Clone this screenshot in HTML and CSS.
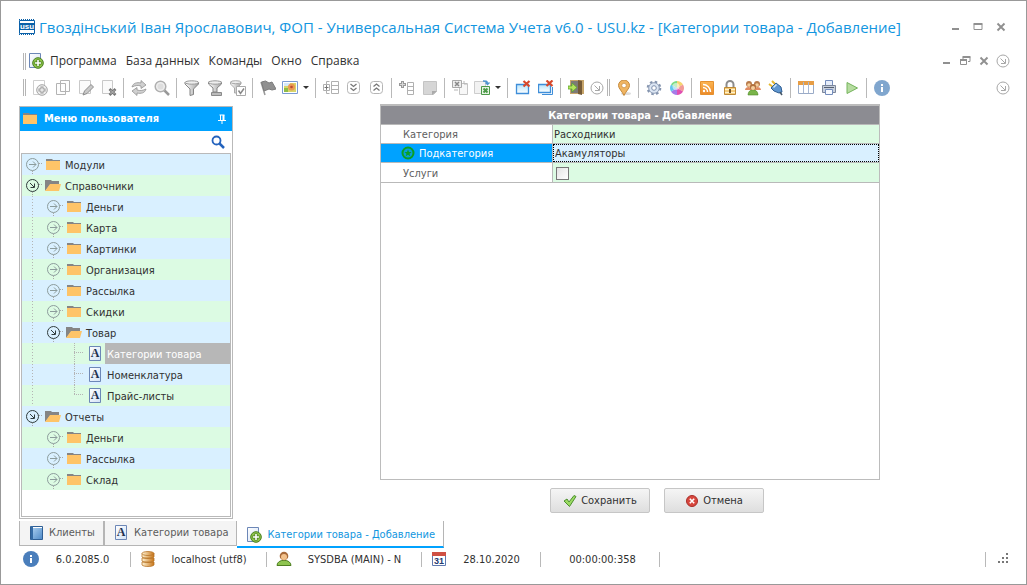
FILE: index.html
```html
<!DOCTYPE html>
<html lang="ru">
<head>
<meta charset="utf-8">
<title>Универсальная Система Учета</title>
<link rel="stylesheet" href="styles.css">
</head>
<body>
<svg class="sprite" aria-hidden="true">
  <defs>
    <linearGradient id="gPaper" x1="0" y1="0" x2="1" y2="1"><stop offset="0" stop-color="#fff"/><stop offset="1" stop-color="#d3e2f6"/></linearGradient>
    <linearGradient id="gFunnel" x1="0" y1="0" x2="1" y2="0"><stop offset="0" stop-color="#fff"/><stop offset="1" stop-color="#a2a2a2"/></linearGradient>
    <linearGradient id="gSky" x1="0" y1="0" x2="0" y2="1"><stop offset="0" stop-color="#b8e4fb"/><stop offset="1" stop-color="#fff"/></linearGradient>
    <linearGradient id="gBook" x1="0" y1="0" x2="1" y2="1"><stop offset="0" stop-color="#b4d6f4"/><stop offset="1" stop-color="#4d88c6"/></linearGradient>
    <linearGradient id="gGold" x1="0" y1="0" x2="1" y2="0"><stop offset="0" stop-color="#fff4d5"/><stop offset="1" stop-color="#c87416"/></linearGradient>
    <linearGradient id="gRss" x1="0" y1="0" x2="0" y2="1"><stop offset="0" stop-color="#fbb552"/><stop offset="1" stop-color="#ec8a28"/></linearGradient>
  </defs>
  <symbol id="folder" viewBox="0 0 16 16"><path d="M1 2h6l1 1h7v3H1z" fill="#858585"/><path d="M1 4h14v9H1z" fill="#fec468"/></symbol>
  <symbol id="folderOpen" viewBox="0 0 16 16"><path d="M0 2h6l1 1h7v4H5L0 13z" fill="#858585"/><path d="M5 6h11l-2 7H0z" fill="#fec468"/></symbol>
  <symbol id="v" viewBox="0 0 21 21"><path d="M10.500 0v21" stroke="#b4b4b4" stroke-dasharray="1 2"/></symbol>
  <symbol id="tee" viewBox="0 0 21 21"><path d="M10.500 0v21M10 9.500h10" stroke="#b4b4b4" stroke-dasharray="1 1"/></symbol>
  <symbol id="corner" viewBox="0 0 21 21"><path d="M10.500 0v10M10 9.500h10" stroke="#b4b4b4" stroke-dasharray="1 1"/></symbol>
  <symbol id="closed" viewBox="0 0 21 21"><path d="M10.500 17v4M17 9.500h4" stroke="#a9a9a9" stroke-dasharray="1 1"/><g fill="none" stroke="#8c9c9c"><circle cx="10.500" cy="10.500" r="6"/><path d="M7 10.500h7M11 7.500l3 3-3 3"/></g></symbol>
  <symbol id="opened" viewBox="0 0 21 21"><path d="M10.500 17v4M17 9.500h4" stroke="#a9a9a9" stroke-dasharray="1 1"/><g fill="none" stroke="#303c3c"><circle cx="10.500" cy="10.500" r="6"/><path d="M8 8l4 4M12.500 8.500v4h-4"/></g></symbol>
  <symbol id="doc" viewBox="0 0 16 16"><path d="M2.500 .5h11v14h-11z" fill="url(#gPaper)" stroke="#6c87b7"/></symbol>
  <symbol id="docAdd" viewBox="0 0 16 16"><path d="M1.500 .5h11v14h-11z" fill="url(#gPaper)" stroke="#6c87b7"/><circle cx="10" cy="10" r="5.300" fill="#8fc44c" stroke="#477d1e"/><path d="M10 6.500v7M6.500 10h7" stroke="#477d1e" stroke-width="3"/><path d="M10 7v6M7 10h6" stroke="#fff" stroke-width="1.600"/></symbol>
  <symbol id="gDocAdd" viewBox="0 0 16 16"><path d="M1.500 .5h11v14h-11z" fill="#fff" stroke="#cfcfcf"/><circle cx="10" cy="10" r="5.300" fill="#eee" stroke="#a5a5a5"/><path d="M10 6.500v7M6.500 10h7" stroke="#999" stroke-width="3"/><path d="M10 7.500v5M7.500 10h5" stroke="#fff"/></symbol>
  <symbol id="copy" viewBox="0 0 16 16"><path d="M5.500 .5h9v11h-9zM1.500 3.500h9v11h-9z" fill="#fdfdfd" stroke="#b3b3b3"/></symbol>
  <symbol id="edit" viewBox="0 0 16 16"><path d="M1.500 .5h11v13h-11z" fill="#fbfbfb" stroke="#c9c9c9"/><path d="M5 15l1.500-4L13 4.500 15.500 7 9 13.500z" fill="#c9c9c9" stroke="#8c8c8c"/></symbol>
  <symbol id="del" viewBox="0 0 16 16"><path d="M1.500 .5h10v13h-10z" fill="#fbfbfb" stroke="#c9c9c9"/><path d="M8.500 9l6 6M14.500 9l-6 6" stroke="#777" stroke-width="2.600"/><path d="M9.500 10l4 4M13.500 10l-4 4" stroke="#bbb"/></symbol>
  <symbol id="refresh" viewBox="0 0 16 16"><path d="M1 7C2 3 6 2 10 3V.5L15 5l-5 3.500V6C7 5 4 5.500 1 7zM15 9c-1 4-5 5-9 4v2.500L1 11l5-3.500V10c3 1 6 .5 9-1z" fill="#d0d0d0" stroke="#929292" stroke-width=".8"/></symbol>
  <symbol id="lens" viewBox="0 0 16 16"><path d="M10 10l5 5" stroke="#999" stroke-width="2.500"/><circle cx="6.500" cy="6.500" r="5.300" fill="#eee" stroke="#b0b0b0" stroke-width="1.500"/><circle cx="6.500" cy="6.500" r="3" fill="#dedede"/></symbol>
  <symbol id="funnel" viewBox="0 0 16 16"><path d="M1 2.500v1.500l5 5v6.500l3.500-1V9l5-5V2.500z" fill="url(#gFunnel)" stroke="#858585"/><ellipse cx="7.800" cy="2.500" rx="6.800" ry="1.700" fill="#eee" stroke="#999"/></symbol>
  <symbol id="funnelLine" viewBox="0 0 16 16"><path d="M1.500 2v2l4.500 4v4h4V8l4.500-4V2z" fill="url(#gFunnel)" stroke="#858585"/><ellipse cx="8" cy="2.500" rx="6.500" ry="1.700" fill="#eee" stroke="#999"/><path d="M4.500 12.500h10v3h-10z" fill="#bbb" stroke="#8a8a8a"/></symbol>
  <symbol id="funnelTick" viewBox="0 0 16 16"><path d="M.5 2v2l4 4v5H7V8l4-4V2z" fill="url(#gFunnel)" stroke="#aaa"/><ellipse cx="5.700" cy="2.200" rx="5" ry="1.500" fill="#eee" stroke="#aaa"/><path d="M6.500 6.500h9v9h-9z" fill="#fff" stroke="#aaa"/><path d="M8.500 10.500l2 3 3.500-5" fill="none" stroke="#888" stroke-width="1.500"/></symbol>
  <symbol id="flag" viewBox="0 0 16 16"><path d="M1 2l4 13" stroke="#999" stroke-width="1.500"/><path d="M1.500 2l4-1 3.500 2 3-1 4 7-4 1-3-1-5 2z" fill="#909090" stroke="#7c7c7c"/></symbol>
  <symbol id="picture" viewBox="0 0 16 16"><path d="M.5 1.500h15v12H.5z" fill="#fff" stroke="#7b9bd2"/><path d="M2 3h12v9H2z" fill="#d8d56a"/><path d="M2 3h6v3H2z" fill="#d4e9fa"/><path d="M2 8h4v4H2z" fill="#8ebc48"/><circle cx="9.500" cy="7" r="3.500" fill="#ea9a54"/><circle cx="9.500" cy="7" r="1.300" fill="#bf4a32"/></symbol>
  <symbol id="groupCols" viewBox="0 0 16 16"><path d="M8.500 1.500h7v12h-7zM8.500 5.500h7M8.500 9.500h7M6.500 1.500h-3v12h3M.5 4.500h6v6h-6z" fill="#fff" stroke="#b0b0b0"/><path d="M1.500 7.500h4M3.500 5.500v4" stroke="#777"/></symbol>
  <symbol id="down2" viewBox="0 0 16 16"><rect x="1.500" y="1.500" width="12" height="12" rx="3" fill="#fff" stroke="#b5b5b5"/><path d="M4.500 4l3 2.500 3-2.500M4.500 8l3 2.500 3-2.500" fill="none" stroke="#777" stroke-width="1.300"/></symbol>
  <symbol id="up2" viewBox="0 0 16 16"><rect x="1.500" y="1.500" width="12" height="12" rx="3" fill="#fff" stroke="#b5b5b5"/><path d="M4.500 6.500l3-2.500 3 2.500M4.500 10.500l3-2.500 3 2.500" fill="none" stroke="#777" stroke-width="1.300"/></symbol>
  <symbol id="addCol" viewBox="0 0 16 16"><path d="M8.500 2.500h6v12h-6zM8.500 6.500h6M8.500 10.500h6" fill="#fff" stroke="#b0b0b0"/><path d="M3.500 1v7M0 4.500h7" stroke="#999" stroke-width="3"/><path d="M3.500 2v5M1 4.500h5" stroke="#d8d8d8"/></symbol>
  <symbol id="note" viewBox="0 0 16 16"><path d="M1.500 1.500h13v10l-3 3h-10z" fill="#d6d6d6" stroke="#c4c4c4"/><path d="M10 15v-4h5z" fill="#aaa"/></symbol>
  <symbol id="xlsGray" viewBox="0 0 16 16"><path d="M7.500 3.500h8v11h-8z" fill="#f7f7f7" stroke="#c4c4c4"/><path d="M.5 .5h9v7h-9z" fill="#eee" stroke="#a9a9a9"/><path d="M3 2l4 4M7 2L3 6" stroke="#888" stroke-width="1.500"/><path d="M3 9v2M5 9v2M12 1v3h3" fill="none" stroke="#b5b5b5"/></symbol>
  <symbol id="xls" viewBox="0 0 16 16"><path d="M.5 1.500h11v12H.5z" fill="#f2f2f2" stroke="#cdcdcd"/><path d="M7.500 6.500h8v8h-8z" fill="#e8f4e6" stroke="#4c9a48"/><path d="M9.500 8.500l4 4M13.500 8.500l-4 4" stroke="#4c9a48" stroke-width="2"/><path d="M9 1c3 0 4 0 4.500 2M11.500 2.500l2 2 2-2" fill="none" stroke="#4d94cf" stroke-width="1.400"/></symbol>
  <symbol id="winClose" viewBox="0 0 16 16"><path d="M1.500 4.500h12v9h-12z" fill="url(#gSky)" stroke="#3f8ed9" stroke-width="1.300"/><path d="M8.500 1l6 5.500M14.500 1L8.500 6.500" stroke="#d8482b" stroke-width="2.200"/></symbol>
  <symbol id="winCloseAll" viewBox="0 0 16 16"><path d="M4 14.500h10.500V7" fill="none" stroke="#3f8ed9"/><path d="M.5 4.500h12v8H.5z" fill="url(#gSky)" stroke="#3f8ed9" stroke-width="1.300"/><path d="M8.500 .5l6 5.500M14.500 .5L8.500 6" stroke="#d8482b" stroke-width="2.200"/></symbol>
  <symbol id="exit" viewBox="0 0 16 16"><path d="M2 0h14v14H2z" fill="#c7a56b"/><path d="M3 1h8v12H3z" fill="#7d7a77"/><path d="M10 0l4 1v14l-4-1z" fill="#745a37"/><path d="M0 6h4V3l5 4.500L4 12V9H0z" fill="#b4e35c" stroke="#5ba42f" stroke-width=".8"/></symbol>
  <symbol id="circleArrow" viewBox="0 0 16 16"><g fill="none" stroke="#a7a7a7"><circle cx="8" cy="8" r="6"/><path d="M5.500 5.500L10 10M10.500 6v4.500H6"/></g></symbol>
  <symbol id="pin" viewBox="0 0 16 16"><ellipse cx="10" cy="13.500" rx="5" ry="1.500" fill="#ddd"/><path d="M8 15.500C6 11 2.500 8.500 2.500 5.500a5.500 5.500 0 0 1 11 0C13.500 8.500 10 11 8 15.500z" fill="#f0b562" stroke="#c58a3c"/><circle cx="8" cy="5.500" r="2.300" fill="#fff" stroke="#c58a3c" stroke-width=".7"/></symbol>
  <symbol id="gear" viewBox="0 0 16 16"><circle cx="8" cy="8" r="6.300" fill="none" stroke="#8494ae" stroke-width="2" stroke-dasharray="2.500 2.450"/><circle cx="8" cy="8" r="5.300" fill="#dce6f3" stroke="#8c9bb5"/><circle cx="8" cy="8" r="2.300" fill="#fff" stroke="#7e90ae"/></symbol>
  <symbol id="colors" viewBox="0 0 16 16"><path d="M8 8V1a7 7 0 0 1 6 3.500z" fill="#f6d56f"/><path d="M8 8l6-3.500a7 7 0 0 1 0 7z" fill="#f29b96"/><path d="M8 8l6 3.500A7 7 0 0 1 8 15z" fill="#e04fb0"/><path d="M8 8v7a7 7 0 0 1-6-3.500z" fill="#a67be8"/><path d="M8 8l-6 3.500a7 7 0 0 1 0-7z" fill="#62c6ee"/><path d="M8 8L2 4.500A7 7 0 0 1 8 1z" fill="#7bdc86"/><circle cx="7" cy="6.500" r="3.500" fill="#fff" opacity=".55"/></symbol>
  <symbol id="rss" viewBox="0 0 16 16"><path d="M1.500 1.500h13v13h-13z" fill="url(#gRss)" stroke="#e5902f"/><g fill="none" stroke="#fff" stroke-width="1.500"><path d="M4 7.500A4.500 4.500 0 0 1 8.500 12M4 4.500A7.500 7.500 0 0 1 11.500 12"/></g><circle cx="5" cy="11" r="1.200" fill="#fff"/></symbol>
  <symbol id="lock" viewBox="0 0 16 16"><path d="M4.500 8V4.500a3.500 3.500 0 0 1 7 0V8" fill="none" stroke="#8c8c8c" stroke-width="2"/><path d="M2.500 7.500h11v7h-11z" fill="#f6cc7a" stroke="#bf8a36"/><path d="M3 9.500h10M3 12.500h10" stroke="#fff2cc"/><path d="M8 9v4" stroke="#684a20" stroke-width="1.800"/></symbol>
  <symbol id="users" viewBox="0 0 16 16"><path d="M0 10c0-4 7-4 7 0zM9 10c0-4 7-4 7 0z" fill="#e08c62"/><path d="M3 15c0-7 10-7 10 0z" fill="#79b44a" stroke="#4f8b28" stroke-width=".6"/><circle cx="4" cy="4" r="3" fill="#b87b4a"/><circle cx="12" cy="4" r="3" fill="#b87b4a"/><circle cx="4" cy="5" r="1.800" fill="#f5cf9d"/><circle cx="12" cy="5" r="1.800" fill="#f5cf9d"/><circle cx="8" cy="7" r="3" fill="#b06f3c"/><circle cx="8" cy="8" r="2" fill="#f5cf9d"/></symbol>
  <symbol id="plug" viewBox="0 0 16 16"><path d="M4 1l3 3M1 4l4 3" stroke="#e5b82e" stroke-width="2"/><path d="M3 8l5-5 5 4 1 5-3 1-5-2z" fill="#5f96cf" stroke="#315f93"/><path d="M5.500 7.500l3-3" stroke="#d4eafc" stroke-width="1.500"/><path d="M12 12l2 3" stroke="#456" stroke-width="1.500"/></symbol>
  <symbol id="table" viewBox="0 0 16 16"><path d="M.5 1.500h15v12H.5z" fill="#fff" stroke="#9aabc7"/><path d="M0 1h16v4H0z" fill="#e79d45"/><path d="M5.500 2v11M10.500 2v11" stroke="#a9b8d2"/></symbol>
  <symbol id="printer" viewBox="0 0 16 16"><path d="M4.500 .5h7v6h-7z" fill="#e6edfa" stroke="#758dbc"/><path d="M1.500 5.500h13v7h-13z" fill="#c7cfdd" stroke="#7c879b"/><path d="M4.500 9.500h7v5h-7z" fill="#f8fbff" stroke="#758dbc"/><path d="M3 7.500h10" stroke="#555f70"/></symbol>
  <symbol id="play" viewBox="0 0 16 16"><path d="M3 2.500v11L13.500 8z" fill="#b6dca0" stroke="#75b45c"/></symbol>
  <symbol id="infoLight" viewBox="0 0 16 16"><circle cx="8" cy="8" r="8" fill="#80a6ce"/><path d="M7 7h2v5H7zM7 4h2v2H7z" fill="#fff"/></symbol>
  <symbol id="info" viewBox="0 0 16 16"><circle cx="8" cy="8" r="8" fill="#4a7ebb"/><path d="M7 7h2v5H7zM7 4h2v2H7z" fill="#fff"/></symbol>
  <symbol id="min" viewBox="0 0 16 16"><path d="M5 9h7v2H5z" fill="#909090"/></symbol>
  <symbol id="max" viewBox="0 0 16 16"><path d="M4 5.500h8v5H4z" fill="none" stroke="#909090"/><path d="M3.500 5h9" stroke="#909090" stroke-width="2"/></symbol>
  <symbol id="restore" viewBox="0 0 16 16"><path d="M6 6V4.500h7v4h-2M3.500 7.500h6v4h-6z" fill="none" stroke="#909090"/><path d="M5.500 4h8M3 7h7" stroke="#909090" stroke-width="2"/></symbol>
  <symbol id="close" viewBox="0 0 16 16"><path d="M4.500 4.500l7 7M11.500 4.500l-7 7" stroke="#909090" stroke-width="1.900"/></symbol>
  <symbol id="pushpin" viewBox="0 0 10 10"><path d="M2.500 1h5M3.500 1v5M1 6.500h8M5 7v3" stroke="#fff" fill="none"/><path d="M5.500 1h2v5h-2z" fill="#fff"/></symbol>
  <symbol id="find" viewBox="0 0 14 14"><circle cx="5.500" cy="5.500" r="4" fill="#fff" stroke="#2463bd" stroke-width="1.800"/><path d="M8.500 8.500l4.500 4.500" stroke="#2463bd" stroke-width="2.500"/></symbol>
  <symbol id="star" viewBox="0 0 14 14"><circle cx="7" cy="7" r="5.500" fill="#069fd9" stroke="#0a9f23" stroke-width="2"/><path d="M7 3.500l1 2.500h2.500l-2 1.700.8 2.600L7 8.700l-2.300 1.600.8-2.600-2-1.700H6z" fill="#0a9f23"/></symbol>
  <symbol id="tick" viewBox="0 0 14 14"><path d="M1 7l3-2 2 3 5-6.500 2 1L6.500 12.500z" fill="#9bdb62" stroke="#4c8f30"/></symbol>
  <symbol id="cancel" viewBox="0 0 14 14"><circle cx="7" cy="7" r="5.500" fill="#d8473e" stroke="#a82d28"/><path d="M4.800 4.800l4.400 4.400M9.200 4.800l-4.400 4.400" stroke="#fff" stroke-width="1.600"/></symbol>
  <symbol id="book" viewBox="0 0 16 16"><path d="M2.500 1.500h12v13h-12z" fill="url(#gBook)" stroke="#2f5f95"/><path d="M3 1h2v14H3z" fill="#356ba5"/><path d="M5 2.500h9" stroke="#fff"/></symbol>
  <symbol id="db" viewBox="0 0 16 16"><g fill="url(#gGold)" stroke="#b9762a" stroke-width=".8"><path d="M2 11v3c2 2 10 2 12 0v-3zM2 7v3c2 2 10 2 12 0V7zM2 2.500v3.500c2 2 10 2 12 0V2.500z"/><ellipse cx="8" cy="2.500" rx="6" ry="2"/></g></symbol>
  <symbol id="user" viewBox="0 0 16 16"><path d="M1 14.500c0-7 14-7 14 0z" fill="#8ec450" stroke="#4f7f22"/><circle cx="8" cy="5" r="4.300" fill="#a86a3a"/><circle cx="8" cy="6" r="3" fill="#f3c28c"/></symbol>
  <symbol id="calendar" viewBox="0 0 16 16"><path d="M1.500 1.500h13v13h-13z" fill="#fff" stroke="#617ab0"/><path d="M1 1h14v4H1z" fill="#cf5144"/></symbol>
  <symbol id="usu" viewBox="0 0 16 16"><path d="M0 .5h16M0 15.500h16" stroke="#0960a8" stroke-dasharray="1 1"/><path d="M.5 1.500h15v13H.5z" fill="#fff" stroke="#0960a8"/><path d="M1 4h14v7H1z" fill="#0960a8"/></symbol>
</svg>
<div class="window">
  <header class="titlebar">
    <svg class="ic" viewBox="0 0 16 16"><use href="#usu"/><text x="8" y="10" text-anchor="middle" class="glyph-usu">usu</text></svg>
    <h1>Гвоздінський Іван Ярославович, ФОП - Универсальная Система Учета v6.0 - USU.kz - [Категории товара - Добавление]</h1>
    <div class="controls wide">
      <button aria-label="Свернуть"><svg class="ic"><use href="#min"/></svg></button>
      <button aria-label="Развернуть"><svg class="ic"><use href="#max"/></svg></button>
      <button aria-label="Закрыть"><svg class="ic"><use href="#close"/></svg></button>
    </div>
  </header>
  <nav class="menubar">
    <i class="grip"></i>
    <svg class="ic"><use href="#docAdd"/></svg>
    <button>Программа</button><button>База данных</button><button>Команды</button><button>Окно</button><button>Справка</button>
    <div class="controls">
      <button aria-label="Свернуть"><svg class="ic"><use href="#min"/></svg></button>
      <button aria-label="Восстановить"><svg class="ic"><use href="#restore"/></svg></button>
      <button aria-label="Закрыть"><svg class="ic"><use href="#close"/></svg></button>
      <button aria-label="Параметры"><svg class="ic"><use href="#circleArrow"/></svg></button>
    </div>
  </nav>
  <div class="toolbar">
    <i class="grip"></i>
    <button aria-label="Добавить"><svg class="ic"><use href="#gDocAdd"/></svg></button>
    <button aria-label="Копировать"><svg class="ic"><use href="#copy"/></svg></button>
    <button aria-label="Изменить"><svg class="ic"><use href="#edit"/></svg></button>
    <button aria-label="Удалить"><svg class="ic"><use href="#del"/></svg></button>
    <i class="sep"></i>
    <button aria-label="Обновить"><svg class="ic"><use href="#refresh"/></svg></button>
    <button aria-label="Поиск"><svg class="ic"><use href="#lens"/></svg></button>
    <i class="sep"></i>
    <button aria-label="Фильтр"><svg class="ic"><use href="#funnel"/></svg></button>
    <button aria-label="Строка фильтра"><svg class="ic"><use href="#funnelLine"/></svg></button>
    <button aria-label="Выбор фильтра"><svg class="ic"><use href="#funnelTick"/></svg></button>
    <i class="sep"></i>
    <button aria-label="Флаг"><svg class="ic"><use href="#flag"/></svg></button>
    <button class="drop" aria-label="Картинка"><svg class="ic"><use href="#picture"/></svg><i class="caret"></i></button>
    <i class="sep"></i>
    <button aria-label="Группировка"><svg class="ic"><use href="#groupCols"/></svg></button>
    <button aria-label="Развернуть все"><svg class="ic"><use href="#down2"/></svg></button>
    <button aria-label="Свернуть все"><svg class="ic"><use href="#up2"/></svg></button>
    <i class="sep"></i>
    <button aria-label="Добавить столбец"><svg class="ic"><use href="#addCol"/></svg></button>
    <button aria-label="Заметка"><svg class="ic"><use href="#note"/></svg></button>
    <i class="sep"></i>
    <button aria-label="Импорт"><svg class="ic"><use href="#xlsGray"/></svg></button>
    <button class="drop" aria-label="Экспорт"><svg class="ic"><use href="#xls"/></svg><i class="caret"></i></button>
    <i class="sep"></i>
    <button aria-label="Закрыть окно"><svg class="ic"><use href="#winClose"/></svg></button>
    <button aria-label="Закрыть все окна"><svg class="ic"><use href="#winCloseAll"/></svg></button>
    <i class="sep"></i>
    <button aria-label="Выход"><svg class="ic"><use href="#exit"/></svg></button>
    <button class="slim" aria-label="Параметры панели"><svg class="ic"><use href="#circleArrow"/></svg></button>
    <i class="grip"></i>
    <button aria-label="Карта"><svg class="ic"><use href="#pin"/></svg></button>
    <i class="sep"></i>
    <button aria-label="Настройки"><svg class="ic"><use href="#gear"/></svg></button>
    <button aria-label="Цвета"><svg class="ic"><use href="#colors"/></svg></button>
    <i class="sep"></i>
    <button aria-label="Новости"><svg class="ic"><use href="#rss"/></svg></button>
    <button aria-label="Блокировка"><svg class="ic"><use href="#lock"/></svg></button>
    <button aria-label="Пользователи"><svg class="ic"><use href="#users"/></svg></button>
    <button aria-label="Подключение"><svg class="ic"><use href="#plug"/></svg></button>
    <i class="sep"></i>
    <button aria-label="Таблица"><svg class="ic"><use href="#table"/></svg></button>
    <button aria-label="Печать"><svg class="ic"><use href="#printer"/></svg></button>
    <button aria-label="Запуск"><svg class="ic"><use href="#play"/></svg></button>
    <i class="sep"></i>
    <button aria-label="О программе"><svg class="ic"><use href="#infoLight"/></svg></button>
    <button class="last" aria-label="Параметры"><svg class="ic"><use href="#circleArrow"/></svg></button>
  </div>
  <div class="body">
    <aside class="sidebar">
      <div class="side-head"><svg class="ic"><use href="#folder"/></svg><h2>Меню пользователя</h2><button aria-label="Закрепить"><svg class="push"><use href="#pushpin"/></svg></button></div>
      <div class="search"><input type="text" aria-label="Поиск в меню"><button aria-label="Найти"><svg><use href="#find"/></svg></button></div>
      <ul class="tree">
        <li><svg class="cell"><use href="#closed"/></svg><svg class="ic"><use href="#folder"/></svg><button>Модули</button></li>
        <li><svg class="cell"><use href="#opened"/></svg><svg class="ic"><use href="#folderOpen"/></svg><button>Справочники</button></li>
        <li><svg class="cell"><use href="#v"/></svg><svg class="cell"><use href="#closed"/></svg><svg class="ic"><use href="#folder"/></svg><button>Деньги</button></li>
        <li><svg class="cell"><use href="#v"/></svg><svg class="cell"><use href="#closed"/></svg><svg class="ic"><use href="#folder"/></svg><button>Карта</button></li>
        <li><svg class="cell"><use href="#v"/></svg><svg class="cell"><use href="#closed"/></svg><svg class="ic"><use href="#folder"/></svg><button>Картинки</button></li>
        <li><svg class="cell"><use href="#v"/></svg><svg class="cell"><use href="#closed"/></svg><svg class="ic"><use href="#folder"/></svg><button>Организация</button></li>
        <li><svg class="cell"><use href="#v"/></svg><svg class="cell"><use href="#closed"/></svg><svg class="ic"><use href="#folder"/></svg><button>Рассылка</button></li>
        <li><svg class="cell"><use href="#v"/></svg><svg class="cell"><use href="#closed"/></svg><svg class="ic"><use href="#folder"/></svg><button>Скидки</button></li>
        <li><svg class="cell"><use href="#v"/></svg><svg class="cell"><use href="#opened"/></svg><svg class="ic"><use href="#folderOpen"/></svg><button>Товар</button></li>
        <li><svg class="cell"><use href="#v"/></svg><i class="cell"></i><svg class="cell"><use href="#tee"/></svg><svg class="ic" viewBox="0 0 16 16"><use href="#doc"/><text x="8" y="11" text-anchor="middle" class="glyph-a">A</text></svg><button class="picked">Категории товара</button></li>
        <li><svg class="cell"><use href="#v"/></svg><i class="cell"></i><svg class="cell"><use href="#tee"/></svg><svg class="ic" viewBox="0 0 16 16"><use href="#doc"/><text x="8" y="11" text-anchor="middle" class="glyph-a">A</text></svg><button>Номенклатура</button></li>
        <li><svg class="cell"><use href="#v"/></svg><i class="cell"></i><svg class="cell"><use href="#corner"/></svg><svg class="ic" viewBox="0 0 16 16"><use href="#doc"/><text x="8" y="11" text-anchor="middle" class="glyph-a">A</text></svg><button>Прайс-листы</button></li>
        <li><svg class="cell"><use href="#opened"/></svg><svg class="ic"><use href="#folderOpen"/></svg><button>Отчеты</button></li>
        <li><i class="cell"></i><svg class="cell"><use href="#closed"/></svg><svg class="ic"><use href="#folder"/></svg><button>Деньги</button></li>
        <li><i class="cell"></i><svg class="cell"><use href="#closed"/></svg><svg class="ic"><use href="#folder"/></svg><button>Рассылка</button></li>
        <li><i class="cell"></i><svg class="cell"><use href="#closed"/></svg><svg class="ic"><use href="#folder"/></svg><button>Склад</button></li>
      </ul>
    </aside>
    <main class="main">
      <form class="form" onsubmit="return false">
        <div class="card">
          <h2>Категории товара - Добавление</h2>
          <div class="row"><label for="cat">Категория</label><input id="cat" type="text" value="Расходники"></div>
          <div class="row active"><label for="sub"><svg><use href="#star"/></svg>Подкатегория</label><input id="sub" type="text" value="Акамуляторы"></div>
          <div class="row"><label for="srv">Услуги</label><span class="value"><input id="srv" type="checkbox"></span></div>
        </div>
        <div class="actions">
          <button type="submit"><svg><use href="#tick"/></svg>Сохранить</button>
          <button type="button"><svg><use href="#cancel"/></svg>Отмена</button>
        </div>
      </form>
    </main>
  </div>
  <nav class="tabs">
    <button><svg class="ic"><use href="#book"/></svg>Клиенты</button>
    <button><svg class="ic" viewBox="0 0 16 16"><use href="#doc"/><text x="8" y="11" text-anchor="middle" class="glyph-a">A</text></svg>Категории товара</button>
    <button class="current"><svg class="ic"><use href="#docAdd"/></svg>Категории товара - Добавление</button>
  </nav>
  <footer class="status">
    <div class="s1"><svg class="ic"><use href="#info"/></svg><span>6.0.2085.0</span></div>
    <div class="s2"><svg class="ic"><use href="#db"/></svg><span>localhost (utf8)</span></div>
    <div class="s3"><svg class="ic"><use href="#user"/></svg><span>SYSDBA (MAIN) - N</span></div>
    <div class="s4"><svg class="ic" viewBox="0 0 16 16"><use href="#calendar"/><text x="8" y="13" text-anchor="middle" class="glyph-31">31</text></svg><span>28.10.2020</span></div>
    <div class="s4"><span>00:00:00:358</span></div>
    <div class="rest"></div>
    <svg class="resize" viewBox="0 0 12 12"><path d="M9 0h2v2H9zM9 4h2v2H9zM5 4h2v2H5zM9 8h2v2H9zM5 8h2v2H5zM1 8h2v2H1z" fill="#777"/></svg>
  </footer>
</div>
</body>
</html>
```
FILE: styles.css
```css
* { box-sizing: border-box; }
html, body { height: 100%; margin: 0; }
body { font: 11px/14px "DejaVu Sans Condensed", "DejaVu Sans", sans-serif; color: #303030; background: #fff; }
button, input { font: inherit; color: inherit; margin: 0; padding: 0; border: 0; background: none; }
button { display: flex; align-items: center; white-space: nowrap; }
h1, h2, ul { margin: 0; padding: 0; }
h2 { font-size: 11px; font-weight: bold; white-space: nowrap; }
.sprite { position: absolute; width: 0; height: 0; }
.ic { width: 16px; height: 16px; flex: none; }
.glyph-a { font: bold 12px "Liberation Serif", serif; fill: #23304f; }
.glyph-31 { font: bold 9px "Liberation Sans", sans-serif; fill: #253a70; }
.glyph-usu { font: bold 8px "Liberation Sans", sans-serif; fill: #fff; }

.window { display: flex; flex-direction: column; min-height: 100%; border: 1px solid #999; }
.titlebar { display: flex; align-items: center; height: 47px; padding: 4px 17px 0 18px; gap: 4px; }
.titlebar h1 { flex: 1; min-width: 0; font: 15px/24px "Open Sans", "Noto Sans", sans-serif; color: #1296e0; white-space: nowrap; }
.controls { display: flex; align-items: center; gap: 3px; margin-left: auto; }
.controls.wide { gap: 7px; }

.menubar { display: flex; align-items: center; height: 26px; padding: 0 15px 0 22px; font: 12px/16px "Open Sans", "Noto Sans", sans-serif; gap: 9px; }
.menubar .grip { margin-right: -7px; }
.menubar > .ic { margin-right: -3px; }
.grip { width: 3px; height: 17px; margin-right: 2px; border: solid #b5b5b5; border-width: 0 1px; flex: none; }

.toolbar { display: flex; align-items: center; height: 27px; padding: 0 15px 0 22px; }
.toolbar button { width: 23px; height: 23px; justify-content: center; flex: none; }
.toolbar .drop { width: 33px; }
.toolbar .slim { width: 20px; }
.toolbar .last { width: 16px; margin-left: auto; }
.sep { width: 7px; height: 20px; flex: none; background: linear-gradient(#b9b9b9, #b9b9b9) center / 1px 100% no-repeat; }
.caret { width: 0; margin-left: 5px; border: solid transparent; border-width: 3px 3px 0; border-top-color: #333; }

.body { flex: 1; display: flex; padding: 3px 0 0 18px; }
.sidebar { display: flex; flex-direction: column; width: 214px; margin-top: 2px; padding: 0 1px 1px; border: 1px solid #b9b9b9; }
.side-head { display: flex; align-items: center; gap: 6px; height: 24px; margin: 0 -1px; padding: 0 5px 0 2px; background: #00a2ff; color: #fff; }
.side-head h2 { flex: 1; }
.push { width: 10px; height: 10px; }
.search { display: flex; align-items: center; height: 22px; padding-right: 6px; }
.search input { flex: 1; min-width: 0; height: 20px; }
.search svg { width: 14px; height: 14px; }
.tree { flex: 1; list-style: none; border: 1px solid #b9b9b9; }
.tree li { display: flex; align-items: center; height: 21px; background: #d9f0ff; }
.tree li:nth-child(even) { background: #dcfbe3; }
.tree .cell { width: 21px; height: 21px; flex: none; }
.tree .ic { margin: 0 2px; }
.tree button { flex: 1; height: 21px; padding: 2px 0 0 2px; }
.tree .picked { background: #b7b7b7; color: #fff; }

.main { flex: 1; display: flex; justify-content: center; padding: 0 0 6px 1px; }
.form { display: flex; flex-direction: column; gap: 8px; width: 500px; }
.card { flex: 1; border: 1px solid #bcbcbc; border-top-width: 2px; }
.card h2 { height: 19px; padding-left: 20px; line-height: 19px; text-align: center; color: #fff; background: #8c8c92; border-bottom: 1px solid #b9b9b9; }
.row { display: flex; height: 19px; border-bottom: 1px solid #b9b9b9; }
.row:last-child { height: 20px; }
.row label { display: flex; align-items: center; gap: 4px; width: 172px; padding: 2px 0 0 22px; color: #606060; border-right: 1px solid #b9b9b9; }
.row label svg { width: 14px; height: 14px; margin: -2px 0 0 -2px; }
.row > input, .value { flex: 1; min-width: 0; padding: 2px 1px 0; background: #dcfbe3; outline: 0; }
.value { display: flex; align-items: center; }
.row.active label { color: #fff; background: #00a2ff; }
.row.active > input { border: 1px dotted #000; background: #d9f0ff; }
.value input { appearance: none; width: 13px; height: 13px; margin-left: 2px; border: 1px solid #777; background: linear-gradient(135deg, #e4e4e4, #fff); }
.actions { display: flex; justify-content: center; gap: 14px; padding-left: 54px; }
.actions button { width: 100px; height: 25px; gap: 4px; justify-content: center; border: 1px solid #c6c6c6; border-radius: 2px; background: linear-gradient(#f5f5f5, #dedede); }
.actions svg { width: 14px; height: 14px; }

.tabs { display: flex; height: 27px; margin-top: 2px; padding-left: 18px; }
.tabs button { height: 25px; gap: 5px; padding: 0 8px; color: #5c5c5c; background: #f4f4f4; border: solid #b5b5b5; border-width: 0 1px 1px; }
.tabs .current { height: 27px; padding: 2px 8px 0 9px; color: #1296e0; background: #fff; border-bottom: 2px solid #00a2ff; border-left: 0; }

.status { display: flex; align-items: center; height: 22px; margin-bottom: 14px; padding: 0 17px 0 22px; }
.status div { display: flex; align-items: center; height: 15px; border-right: 1px solid #b9b9b9; }
.status span { flex: 1; padding: 2px 4px 0 0; text-align: center; white-space: nowrap; }
.s1 { width: 108px; }
.status .s2, .status .s3, .status .s4 { padding-left: 9px; }
.s2 { width: 136px; }
.s3 { width: 155px; }
.s4 { width: 119px; }
.status .rest { flex: 1; }
.resize { width: 12px; height: 12px; margin-left: 11px; }
```
